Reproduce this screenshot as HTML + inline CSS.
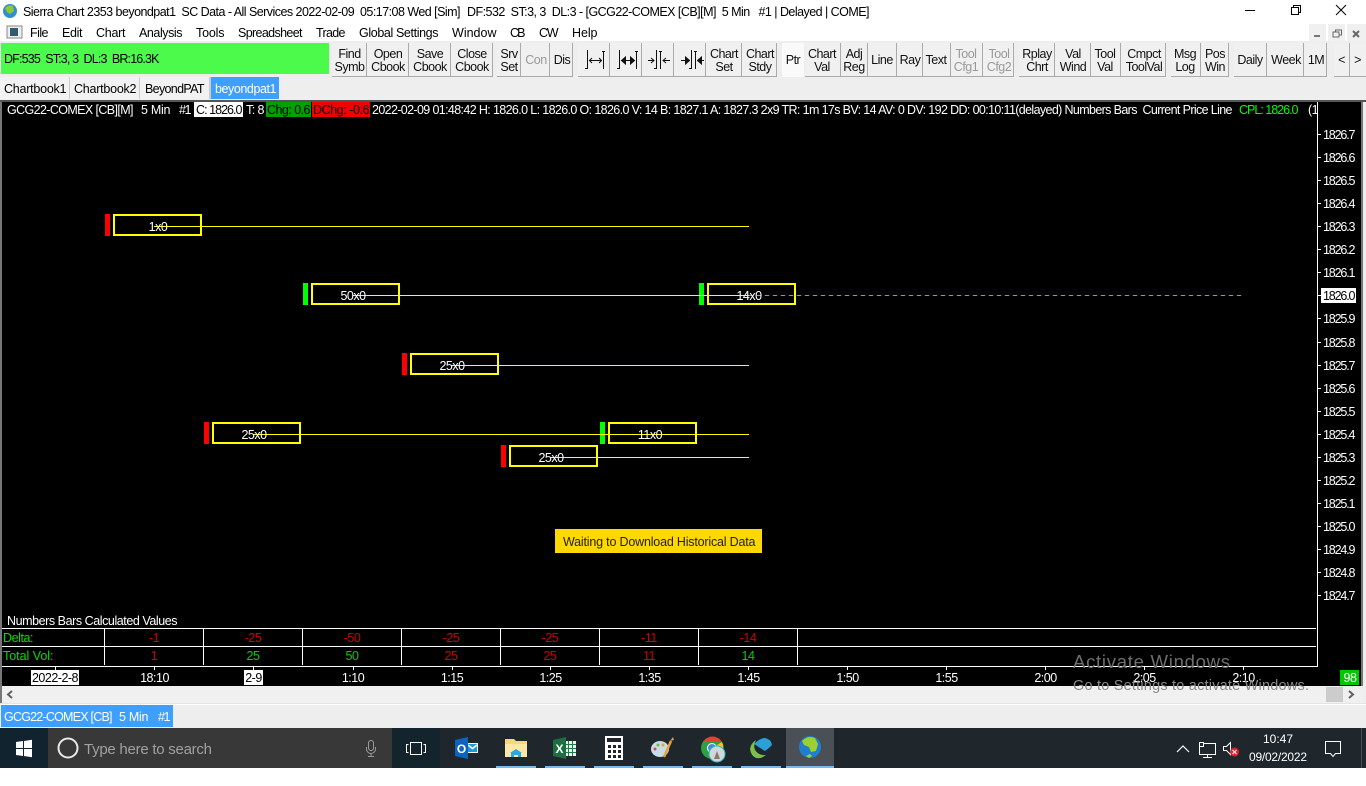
<!DOCTYPE html>
<html><head><meta charset="utf-8"><title>Sierra Chart</title>
<style>
html,body{margin:0;padding:0;background:#fff;width:1366px;height:786px;overflow:hidden}
svg{display:block;position:absolute;left:0;top:0}
text{font-family:"Liberation Sans",sans-serif;font-size:12.5px;letter-spacing:-.5px;white-space:pre;fill:#000}
.m{text-anchor:middle}
.b text{text-anchor:middle;fill:#111}
.g{fill:#999!important}
.w text,.w{fill:#fff}
.r{fill:#e00000}
.n{fill:#00d000}
rect,line{shape-rendering:crispEdges}
</style></head><body>
<svg width="1366" height="786" viewBox="0 0 1366 786" xmlns="http://www.w3.org/2000/svg">
<rect width="1366" height="786" fill="#fff"/>
<!-- title -->
<circle cx="10" cy="11" r="7" fill="#2f8fd0"/><path d="M5 8q4-4 8-2l1 5-4 3-3-2z" fill="#8fc830"/>
<text x="23" y="16" textLength="437">Sierra Chart 2353 beyondpat1  SC Data - All Services 2022-02-09  05:17:08 Wed [Sim]</text>
<text x="467" y="16" textLength="402">DF:532  ST:3, 3  DL:3 - [GCG22-COMEX [CB][M]  5 Min   #1 | Delayed | COME]</text>
<line x1="1245" y1="10.5" x2="1255" y2="10.5" stroke="#000"/>
<rect x="1291.5" y="7.5" width="7" height="7" fill="none" stroke="#000"/><path d="M1293.5 7.5v-2h7v7h-2" fill="none" stroke="#000"/>
<path d="M1336 5l10 10M1346 5l-10 10" stroke="#000" fill="none" stroke-width="1"/>
<!-- menu -->
<rect x="7" y="26" width="15" height="12" fill="#eee" stroke="#888"/><rect x="10" y="28" width="8" height="8" fill="#345a70"/>
<text x="30" y="37" textLength="18">File</text><text x="62" y="37" textLength="20">Edit</text><text x="96" y="37" textLength="29">Chart</text><text x="139" y="37" textLength="43">Analysis</text><text x="196" y="37" textLength="28">Tools</text><text x="238" y="37" textLength="64">Spreadsheet</text><text x="316" y="37" textLength="29">Trade</text><text x="359" y="37" textLength="79">Global Settings</text><text x="452" y="37" textLength="44">Window</text><text x="510" y="37" textLength="15">CB</text><text x="539" y="37" textLength="19">CW</text><text x="572" y="37" textLength="25">Help</text>
<rect x="1309" y="24" width="17" height="17" fill="#f0f0f0"/><rect x="1328" y="24" width="17" height="17" fill="#f0f0f0"/><rect x="1347" y="24" width="19" height="17" fill="#f0f0f0"/>
<rect x="1314" y="35" width="6" height="2" fill="#777"/>
<rect x="1333" y="32" width="6" height="5" fill="none" stroke="#666"/><path d="M1335.5 32v-2h6v5h-2" fill="none" stroke="#666"/>
<path d="M1353 31l6 6M1359 31l-6 6" stroke="#666" stroke-width="2" fill="none"/>
<!-- toolbar -->
<rect x="0" y="41" width="1366" height="59" fill="#eee"/>
<rect x="1" y="43" width="328" height="31" fill="#4cfa4c"/>
<text x="4" y="63" textLength="155">DF:535  ST:3, 3  DL:3  BR:16.3K</text>
<g fill="#f0f0f0">
<rect x="332" y="43" width="34" height="34"/><rect x="367" y="43" width="41" height="34"/><rect x="409" y="43" width="41" height="34"/><rect x="451" y="43" width="42" height="34"/>
<rect x="497" y="43" width="23" height="34"/><rect x="521" y="43" width="28" height="34"/><rect x="550" y="43" width="23" height="34"/>
<rect x="578" y="43" width="31" height="34"/><rect x="610" y="43" width="31" height="34"/><rect x="642" y="43" width="31" height="34"/><rect x="674" y="43" width="31" height="34"/><rect x="706" y="43" width="35" height="34"/><rect x="742" y="43" width="35" height="34"/>
<rect x="782" y="43" width="22" height="34" fill="#fafafa"/><rect x="805" y="43" width="35" height="34"/><rect x="841" y="43" width="26" height="34"/><rect x="868" y="43" width="28" height="34"/><rect x="897" y="43" width="25" height="34"/><rect x="923" y="43" width="27" height="34"/><rect x="951" y="43" width="31" height="34"/><rect x="983" y="43" width="31" height="34"/>
<rect x="1019" y="43" width="35" height="34"/><rect x="1055" y="43" width="35" height="34"/><rect x="1091" y="43" width="29" height="34"/><rect x="1121" y="43" width="45" height="34"/>
<rect x="1171" y="43" width="29" height="34"/><rect x="1201" y="43" width="28" height="34"/><rect x="1234" y="43" width="32" height="34"/><rect x="1267" y="43" width="36" height="34"/><rect x="1304" y="43" width="23" height="34"/><rect x="1334" y="43" width="15" height="34"/><rect x="1350" y="43" width="16" height="34"/>
</g>
<g fill="#aaa">
<rect x="332" y="76" width="161" height="1"/><rect x="497" y="76" width="76" height="1"/><rect x="578" y="76" width="199" height="1"/><rect x="805" y="76" width="209" height="1"/><rect x="1019" y="76" width="147" height="1"/><rect x="1171" y="76" width="58" height="1"/><rect x="1234" y="76" width="93" height="1"/><rect x="1334" y="76" width="32" height="1"/>
<rect x="366" y="43" width="1" height="34"/><rect x="408" y="43" width="1" height="34"/><rect x="450" y="43" width="1" height="34"/><rect x="492" y="43" width="1" height="34"/><rect x="520" y="43" width="1" height="34"/><rect x="549" y="43" width="1" height="34"/><rect x="572" y="43" width="1" height="34"/><rect x="609" y="43" width="1" height="34"/><rect x="641" y="43" width="1" height="34"/><rect x="673" y="43" width="1" height="34"/><rect x="705" y="43" width="1" height="34"/><rect x="741" y="43" width="1" height="34"/><rect x="776" y="43" width="1" height="34"/><rect x="840" y="43" width="1" height="34"/><rect x="867" y="43" width="1" height="34"/><rect x="896" y="43" width="1" height="34"/><rect x="922" y="43" width="1" height="34"/><rect x="950" y="43" width="1" height="34"/><rect x="982" y="43" width="1" height="34"/><rect x="1013" y="43" width="1" height="34"/><rect x="1054" y="43" width="1" height="34"/><rect x="1090" y="43" width="1" height="34"/><rect x="1120" y="43" width="1" height="34"/><rect x="1165" y="43" width="1" height="34"/><rect x="1200" y="43" width="1" height="34"/><rect x="1228" y="43" width="1" height="34"/><rect x="1266" y="43" width="1" height="34"/><rect x="1303" y="43" width="1" height="34"/><rect x="1326" y="43" width="1" height="34"/><rect x="1349" y="43" width="1" height="34"/>
</g>
<g class="b">
<text x="349.500" y="58">Find</text><text x="349.500" y="71">Symb</text>
<text x="388" y="58">Open</text><text x="388" y="71">Cbook</text>
<text x="430" y="58">Save</text><text x="430" y="71">Cbook</text>
<text x="472" y="58">Close</text><text x="472" y="71">Cbook</text>
<text x="509" y="58">Srv</text><text x="509" y="71">Set</text>
<text x="536" y="64" class="g">Con</text><text x="562" y="64">Dis</text>
<text x="724" y="58">Chart</text><text x="724" y="71">Set</text>
<text x="760" y="58">Chart</text><text x="760" y="71">Stdy</text>
<text x="793" y="64">Ptr</text>
<text x="822" y="58">Chart</text><text x="822" y="71">Val</text>
<text x="854" y="58">Adj</text><text x="854" y="71">Reg</text>
<text x="882" y="64">Line</text><text x="910" y="64">Ray</text><text x="936" y="64">Text</text>
<text x="966" y="58" class="g">Tool</text><text x="966" y="71" class="g">Cfg1</text>
<text x="999" y="58" class="g">Tool</text><text x="999" y="71" class="g">Cfg2</text>
<text x="1037" y="58">Rplay</text><text x="1037" y="71">Chrt</text>
<text x="1073" y="58">Val</text><text x="1073" y="71">Wind</text>
<text x="1105" y="58">Tool</text><text x="1105" y="71">Val</text>
<text x="1144" y="58">Cmpct</text><text x="1144" y="71">ToolVal</text>
<text x="1185" y="58">Msg</text><text x="1185" y="71">Log</text>
<text x="1215" y="58">Pos</text><text x="1215" y="71">Win</text>
<text x="1250" y="64">Daily</text><text x="1286" y="64">Week</text><text x="1316" y="64">1M</text>
<text x="1341.500" y="64">&lt;</text><text x="1357.500" y="64">&gt;</text>
</g>
<g fill="none" stroke="#111">
<path d="M587.500 50v18M603.500 51v18M585 68.500h3M602 51.500h3M590 60.500h11M592 58l-2.500 2.500 2.500 2.500M599 58l2.500 2.500-2.500 2.500"/>
<path d="M619.500 50v18M636.500 51v18M617 68.500h3M635 51.500h3M622 60.500h12" stroke-width="1"/><path d="M621.500 60.500l4-3.500v7zM634.500 60.500l-4-3.500v7z" fill="#111"/>
<path d="M656.500 50v18M660.500 51v18M654 68.500h3M659 51.500h3M648 60.500h6M651 58l3 2.500-3 2.500M670 60.500h-7M666 58l-3 2.500 3 2.500"/>
<path d="M691.500 50v18M695.500 51v18M689 68.500h3M694 51.500h3M681 60.500h5M704 60.500h-5"/><path d="M689.500 60.500l-4-3.500v7zM697.500 60.500l4-3.500v7z" fill="#111"/>
</g>
<!-- tabs -->
<rect x="0" y="77" width="69" height="22" fill="#f2f2f2"/><rect x="70" y="77" width="69" height="22" fill="#f2f2f2"/><rect x="140" y="77" width="69" height="22" fill="#f2f2f2"/><rect x="211" y="77" width="68" height="22" fill="#3f9fff"/>
<rect x="69" y="77" width="1" height="22" fill="#ccc"/><rect x="139" y="77" width="1" height="22" fill="#ccc"/><rect x="209" y="77" width="2" height="22" fill="#ccc"/>
<text x="4" y="93" textLength="62">Chartbook1</text><text x="74" y="93" textLength="62">Chartbook2</text><text x="145" y="93" textLength="59">BeyondPAT</text><text x="215" y="93" textLength="61" fill="#fff" style="fill:#fff">beyondpat1</text>
<!-- chart -->
<rect x="0" y="100" width="1366" height="2" fill="#555"/>
<rect x="2" y="102" width="1359" height="584" fill="#000"/>
<rect x="0" y="102" width="2" height="601" fill="#777"/>
<rect x="1361" y="102" width="2" height="584" fill="#777"/>
<rect x="1363" y="102" width="3" height="601" fill="#eee"/>
<rect x="1317" y="102" width="1" height="565" fill="#fff"/>
<!-- header -->
<g class="w">
<text x="7" y="114" textLength="126" style="fill:#fff">GCG22-COMEX [CB][M]</text>
<text x="141" y="114" textLength="29" style="fill:#fff">5 Min</text>
<text x="179" y="114" textLength="12" style="fill:#fff">#1</text>
<text x="246" y="114" textLength="18" style="fill:#fff">T: 8</text>
<text x="372" y="114" textLength="860" style="fill:#fff">2022-02-09 01:48:42 H: 1826.0 L: 1826.0 O: 1826.0 V: 14 B: 1827.1 A: 1827.3 2x9 TR: 1m 17s BV: 14 AV: 0 DV: 192 DD: 00:10:11(delayed) Numbers Bars  Current Price Line</text>
<text x="1308" y="114" style="fill:#fff">(1</text>
</g>
<rect x="194" y="102" width="49" height="15" fill="#fff"/><text x="196" y="114" textLength="46">C: 1826.0</text>
<rect x="266" y="102" width="45" height="15" fill="#00a000"/><text x="267" y="114" textLength="43">Chg: 0.6</text>
<rect x="312" y="102" width="58" height="15" fill="#f00000"/><text x="313" y="114" textLength="56">DChg: -0.6</text>
<text x="1239" y="114" textLength="59" style="fill:#00ff00">CPL: 1826.0</text>
<!-- axis ticks -->
<g fill="#fff">
<rect x="1318" y="134" width="3" height="1"/><rect x="1318" y="157" width="3" height="1"/><rect x="1318" y="180" width="3" height="1"/><rect x="1318" y="203" width="3" height="1"/><rect x="1318" y="226" width="3" height="1"/><rect x="1318" y="249" width="3" height="1"/><rect x="1318" y="272" width="3" height="1"/><rect x="1318" y="295" width="3" height="1"/><rect x="1318" y="318" width="3" height="1"/><rect x="1318" y="342" width="3" height="1"/><rect x="1318" y="365" width="3" height="1"/><rect x="1318" y="388" width="3" height="1"/><rect x="1318" y="411" width="3" height="1"/><rect x="1318" y="434" width="3" height="1"/><rect x="1318" y="457" width="3" height="1"/><rect x="1318" y="480" width="3" height="1"/><rect x="1318" y="503" width="3" height="1"/><rect x="1318" y="526" width="3" height="1"/><rect x="1318" y="549" width="3" height="1"/><rect x="1318" y="572" width="3" height="1"/><rect x="1318" y="595" width="3" height="1"/>
</g>
<rect x="1321" y="288" width="35" height="15" fill="#fff"/>
<g>
<text x="1323" y="139" textLength="32" style="fill:#fff">1826.7</text><text x="1323" y="162" textLength="32" style="fill:#fff">1826.6</text><text x="1323" y="185" textLength="32" style="fill:#fff">1826.5</text><text x="1323" y="208" textLength="32" style="fill:#fff">1826.4</text><text x="1323" y="231" textLength="32" style="fill:#fff">1826.3</text><text x="1323" y="254" textLength="32" style="fill:#fff">1826.2</text><text x="1323" y="277" textLength="32" style="fill:#fff">1826.1</text><text x="1323" y="300" textLength="32">1826.0</text><text x="1323" y="323" textLength="32" style="fill:#fff">1825.9</text><text x="1323" y="347" textLength="32" style="fill:#fff">1825.8</text><text x="1323" y="370" textLength="32" style="fill:#fff">1825.7</text><text x="1323" y="393" textLength="32" style="fill:#fff">1825.6</text><text x="1323" y="416" textLength="32" style="fill:#fff">1825.5</text><text x="1323" y="439" textLength="32" style="fill:#fff">1825.4</text><text x="1323" y="462" textLength="32" style="fill:#fff">1825.3</text><text x="1323" y="485" textLength="32" style="fill:#fff">1825.2</text><text x="1323" y="508" textLength="32" style="fill:#fff">1825.1</text><text x="1323" y="531" textLength="32" style="fill:#fff">1825.0</text><text x="1323" y="554" textLength="32" style="fill:#fff">1824.9</text><text x="1323" y="577" textLength="32" style="fill:#fff">1824.8</text><text x="1323" y="600" textLength="32" style="fill:#fff">1824.7</text>
</g>
<!-- bars -->
<g fill="none" stroke="#ff0" stroke-width="2" shape-rendering="crispEdges">
<rect x="114" y="215" width="87" height="20"/><rect x="312" y="284" width="87" height="20"/><rect x="708" y="284" width="87" height="20"/><rect x="411" y="354" width="87" height="20"/><rect x="213" y="423" width="87" height="20"/><rect x="609" y="423" width="87" height="20"/><rect x="510" y="446" width="87" height="20"/>
</g>
<rect x="105" y="214" width="5" height="22" fill="#f00"/><rect x="303" y="283" width="5" height="22" fill="#0f0"/><rect x="699" y="283" width="5" height="22" fill="#0f0"/><rect x="402" y="353" width="5" height="22" fill="#f00"/><rect x="204" y="422" width="5" height="22" fill="#f00"/><rect x="600" y="422" width="5" height="22" fill="#0f0"/><rect x="501" y="445" width="5" height="22" fill="#f00"/>
<g fill="#ff0">
<rect x="154" y="226" width="595" height="1"/><rect x="353" y="295" width="396" height="1"/><rect x="452" y="365" width="297" height="1"/><rect x="254" y="434" width="495" height="1"/><rect x="551" y="457" width="198" height="1"/>
</g>
<line x1="749" y1="295.500" x2="1243" y2="295.500" stroke="#00ff00" stroke-dasharray="4 4"/>
<g class="m" style="text-anchor:middle">
<text class="m" x="158" y="231" style="fill:#fff">1x0</text><text class="m" x="353" y="300" style="fill:#fff">50x0</text><text class="m" x="749" y="300" style="fill:#fff">14x0</text><text class="m" x="452" y="370" style="fill:#fff">25x0</text><text class="m" x="254" y="439" style="fill:#fff">25x0</text><text class="m" x="650" y="439" style="fill:#fff">11x0</text><text class="m" x="551" y="462" style="fill:#fff">25x0</text>
</g>
<rect x="555" y="529" width="207" height="24" fill="#ffd800"/>
<text x="563" y="546" textLength="192" style="fill:#222">Waiting to Download Historical Data</text>
<!-- table -->
<text x="7" y="625" textLength="170" style="fill:#fff">Numbers Bars Calculated Values</text>
<g fill="#fff">
<rect x="2" y="628" width="1314" height="1"/><rect x="2" y="646" width="1314" height="1"/><rect x="2" y="666" width="1316" height="1"/>
<rect x="104" y="628" width="1" height="37"/><rect x="203" y="628" width="1" height="37"/><rect x="302" y="628" width="1" height="37"/><rect x="401" y="628" width="1" height="37"/><rect x="500" y="628" width="1" height="37"/><rect x="599" y="628" width="1" height="37"/><rect x="698" y="628" width="1" height="37"/><rect x="797" y="628" width="1" height="37"/>
<rect x="55" y="667" width="1" height="3"/><rect x="154" y="667" width="1" height="3"/><rect x="253" y="667" width="1" height="3"/><rect x="353" y="667" width="1" height="3"/><rect x="452" y="667" width="1" height="3"/><rect x="550" y="667" width="1" height="3"/><rect x="649" y="667" width="1" height="3"/><rect x="748" y="667" width="1" height="3"/><rect x="847" y="667" width="1" height="3"/><rect x="946" y="667" width="1" height="3"/><rect x="1045" y="667" width="1" height="3"/><rect x="1144" y="667" width="1" height="3"/><rect x="1243" y="667" width="1" height="3"/>
</g>
<text x="3" y="642" textLength="30" class="n" style="fill:#00e000">Delta:</text>
<text x="3" y="660" textLength="50" class="n" style="fill:#00e000">Total Vol:</text>
<g style="fill:#e00000">
<text class="m" x="154" y="642" style="fill:#d00000">-1</text><text class="m" x="253" y="642" style="fill:#d00000">-25</text><text class="m" x="352" y="642" style="fill:#d00000">-50</text><text class="m" x="451" y="642" style="fill:#d00000">-25</text><text class="m" x="550" y="642" style="fill:#d00000">-25</text><text class="m" x="649" y="642" style="fill:#d00000">-11</text><text class="m" x="748" y="642" style="fill:#d00000">-14</text>
<text class="m" x="154" y="660" style="fill:#d00000">1</text><text class="m" x="253" y="660" style="fill:#00d000">25</text><text class="m" x="352" y="660" style="fill:#00d000">50</text><text class="m" x="451" y="660" style="fill:#d00000">25</text><text class="m" x="550" y="660" style="fill:#d00000">25</text><text class="m" x="649" y="660" style="fill:#d00000">11</text><text class="m" x="748" y="660" style="fill:#00d000">14</text>
</g>
<!-- time labels -->
<rect x="31" y="670" width="48" height="15" fill="#fff"/><rect x="244" y="670" width="19" height="15" fill="#fff"/>
<text class="m" x="55" y="682">2022-2-8</text><text class="m" x="253.500" y="682">2-9</text>
<text class="m" x="154.500" y="682" style="fill:#fff">18:10</text><text class="m" x="353" y="682" style="fill:#fff">1:10</text><text class="m" x="452" y="682" style="fill:#fff">1:15</text><text class="m" x="550.500" y="682" style="fill:#fff">1:25</text><text class="m" x="649.500" y="682" style="fill:#fff">1:35</text><text class="m" x="748.500" y="682" style="fill:#fff">1:45</text><text class="m" x="847.500" y="682" style="fill:#fff">1:50</text><text class="m" x="946.500" y="682" style="fill:#fff">1:55</text><text class="m" x="1045.500" y="682" style="fill:#fff">2:00</text><text class="m" x="1144.500" y="682" style="fill:#fff">2:05</text><text class="m" x="1243.500" y="682" style="fill:#fff">2:10</text>
<rect x="1340" y="670" width="19" height="15" fill="#00c800"/><text class="m" x="1350" y="682" style="fill:#fff">98</text>
<!-- scrollbar -->
<rect x="2" y="686" width="1361" height="17" fill="#f0f0f0"/>
<rect x="0" y="703" width="1366" height="2" fill="#e4e4e4"/>
<rect x="0" y="704" width="1366" height="1" fill="#fff"/>
<rect x="1326" y="687" width="17" height="15" fill="#ccc"/>
<path d="M12 691l-4 3.500 4 3.500" fill="none" stroke="#606060" stroke-width="2"/>
<path d="M1349 691l4 3.500-4 3.500" fill="none" stroke="#606060" stroke-width="2"/>
<!-- lower tab bar -->
<rect x="0" y="705" width="1366" height="23" fill="#eee"/>
<rect x="1" y="705" width="172" height="22" fill="#3f9fff"/>
<text x="4" y="721" textLength="108" style="fill:#fff">GCG22-COMEX [CB]</text>
<text x="119" y="721" textLength="29" style="fill:#fff">5 Min</text>
<text x="158" y="721" textLength="12" style="fill:#fff">#1</text>
<!-- watermark -->
<text x="1073" y="668" textLength="157" style="font-size:18.500px;fill:#6e6e6e;letter-spacing:0">Activate Windows</text>
<text x="1073" y="690" textLength="236" style="font-size:14.500px;fill:#8a8a8a;letter-spacing:0">Go to Settings to activate Windows.</text>
<!-- taskbar -->
<rect x="0" y="728" width="1366" height="40" fill="#1f272c"/>
<rect x="0" y="728" width="48" height="40" fill="#10232e"/>
<rect x="392" y="728" width="48" height="40" fill="#14242d"/>
<rect x="48" y="728" width="344" height="40" fill="#383838"/>
<path d="M16 742l7-1v7h-7zM24 741l8-1.200v8.200h-8zM16 749h7v7l-7-1zM24 749h8v8.200l-8-1.200z" fill="#fff"/>
<circle cx="68" cy="748" r="9.500" fill="none" stroke="#e8e8e8" stroke-width="2"/>
<text x="84" y="754" textLength="128" style="font-size:15px;fill:#a0a0a0;letter-spacing:0">Type here to search</text>
<rect x="368.500" y="740.500" width="5" height="10" rx="2.500" fill="none" stroke="#999"/><path d="M366.500 747v2a4.500 4.500 0 0 0 9 0v-2M371 754v2M368 756.500h6" fill="none" stroke="#999"/>
<rect x="410.500" y="742.500" width="11" height="12" fill="none" stroke="#fff"/><path d="M408.500 744.500h-2v8h2M423.500 744.500h2v8h-2" fill="none" stroke="#fff"/>
<!-- outlook -->
<rect x="467" y="743" width="11" height="10" fill="#fff"/><rect x="468" y="744" width="9" height="8" fill="#1c9bdc"/><path d="M468 745l4.500 3.500 4.500-3.500" fill="none" stroke="#fff" stroke-width="1.500"/><path d="M455 740l13-3v22l-13-3z" fill="#0a64c0"/>
<text class="m" x="461.500" y="753" style="fill:#fff;font-weight:bold;font-size:12px;letter-spacing:0">O</text>
<!-- folder -->
<path d="M505 739h9l2 2h11v16h-22z" fill="#f6d87c"/><rect x="505" y="744" width="22" height="13" fill="#fbe8a6"/><path d="M511 757v-4h-1l6-4 6 4h-1v4h-3v-2h-4v2z" fill="#2ba6e0"/>
<!-- excel -->
<rect x="565" y="741" width="11" height="15" fill="#eee"/><path d="M568.500 741v15M572.500 741v15M565 744.500h11M565 748.500h11M565 752.500h11" stroke="#1f7a45" fill="none"/><path d="M553 740l13-3v22l-13-3z" fill="#1d6f42"/>
<text class="m" x="559.500" y="753" style="fill:#fff;font-weight:bold;font-size:12px;letter-spacing:0">X</text>
<!-- calc -->
<rect x="605" y="736" width="18" height="24" fill="#fff"/><rect x="607" y="738" width="14" height="4" fill="#1f272c"/>
<g fill="#1f272c"><rect x="608" y="745" width="3" height="3"/><rect x="613" y="745" width="3" height="3"/><rect x="618" y="745" width="3" height="3"/><rect x="608" y="750" width="3" height="3"/><rect x="613" y="750" width="3" height="3"/><rect x="618" y="750" width="3" height="3"/><rect x="608" y="755" width="3" height="3"/><rect x="613" y="755" width="3" height="3"/><rect x="618" y="755" width="3" height="3"/></g>
<!-- paint -->
<ellipse cx="660" cy="749" rx="9" ry="8" fill="#c9dde6"/><circle cx="658" cy="745" r="1.500" fill="#6cbc4a"/><circle cx="663" cy="745" r="1.500" fill="#e9a33a"/><circle cx="655" cy="749" r="1.500" fill="#d05050"/>
<path d="M664 757l7-16" stroke="#e9a33a" stroke-width="2.500" fill="none"/><path d="M670 741l3-4 1 3z" fill="#cf9b6a"/>
<!-- chrome -->
<circle cx="712" cy="748" r="11" fill="#2f9e44"/><path d="M703 742a11 11 0 0 1 19 0h-10z" fill="#e34234"/><path d="M722 742a11 11 0 0 1-4 15l-6-9z" fill="#f5c518"/><circle cx="712" cy="748" r="4.500" fill="#4a86e8" stroke="#fff"/><circle cx="717" cy="754" r="8" fill="#cfd8dc" stroke="#2fb8b0" stroke-width="1"/><path d="M714 759l3-8 3 8z" fill="#8a7a66"/>
<!-- sphere -->
<path d="M754 744q6-6 11-6 6 1 7 7-4 4-7 6" fill="#2a9fd8"/><path d="M766 755q-5 4-10 3-5-2-6-9 1-6 6-9-3 5-1 10 4 6 11 5z" fill="#7cc04a"/>
<!-- globe -->
<rect x="786" y="728" width="48" height="40" fill="#4a5055"/>
<circle cx="810" cy="747" r="11" fill="#1e7fd0"/><path d="M802 741q6-6 13-3l3 6-2 7-5 1-2-5-5-2z" fill="#9bd030"/><path d="M806 756l4-2 2 2-3 2z" fill="#9bd030"/>
<!-- running bars -->
<g fill="#76b9ed"><rect x="496" y="766" width="40" height="2"/><rect x="545" y="766" width="40" height="2"/><rect x="594" y="766" width="40" height="2"/><rect x="643" y="766" width="40" height="2"/><rect x="692" y="766" width="40" height="2"/><rect x="741" y="766" width="40" height="2"/><rect x="786" y="766" width="48" height="2"/></g>
<!-- tray -->
<path d="M1177 752l6-6 6 6" fill="none" stroke="#fff" stroke-width="1.200"/>
<path d="M1199.500 743.500h16v11h-16zM1207.500 754.500v3M1203 757.500h9" fill="none" stroke="#fff"/><rect x="1199.500" y="742.500" width="4" height="4" fill="#1f272c" stroke="#fff"/>
<path d="M1223.500 746.500h3l4-4v12l-4-4h-3z" fill="none" stroke="#fff"/>
<circle cx="1234.500" cy="752" r="4.500" fill="#e02030"/><path d="M1232.500 750l4 4M1236.500 750l-4 4" stroke="#fff"/>
<text class="m" x="1278" y="743" style="fill:#fff;letter-spacing:0;font-size:12px">10:47</text>
<text class="m" x="1278" y="761" textLength="58" style="fill:#fff;letter-spacing:0;font-size:12px">09/02/2022</text>
<path d="M1325.500 741.500h15v12h-5l-2.500 3-2.500-3h-5z" fill="none" stroke="#fff"/>
<rect x="1361" y="728" width="1" height="40" fill="#4a5055"/>
</svg>
</body></html>
